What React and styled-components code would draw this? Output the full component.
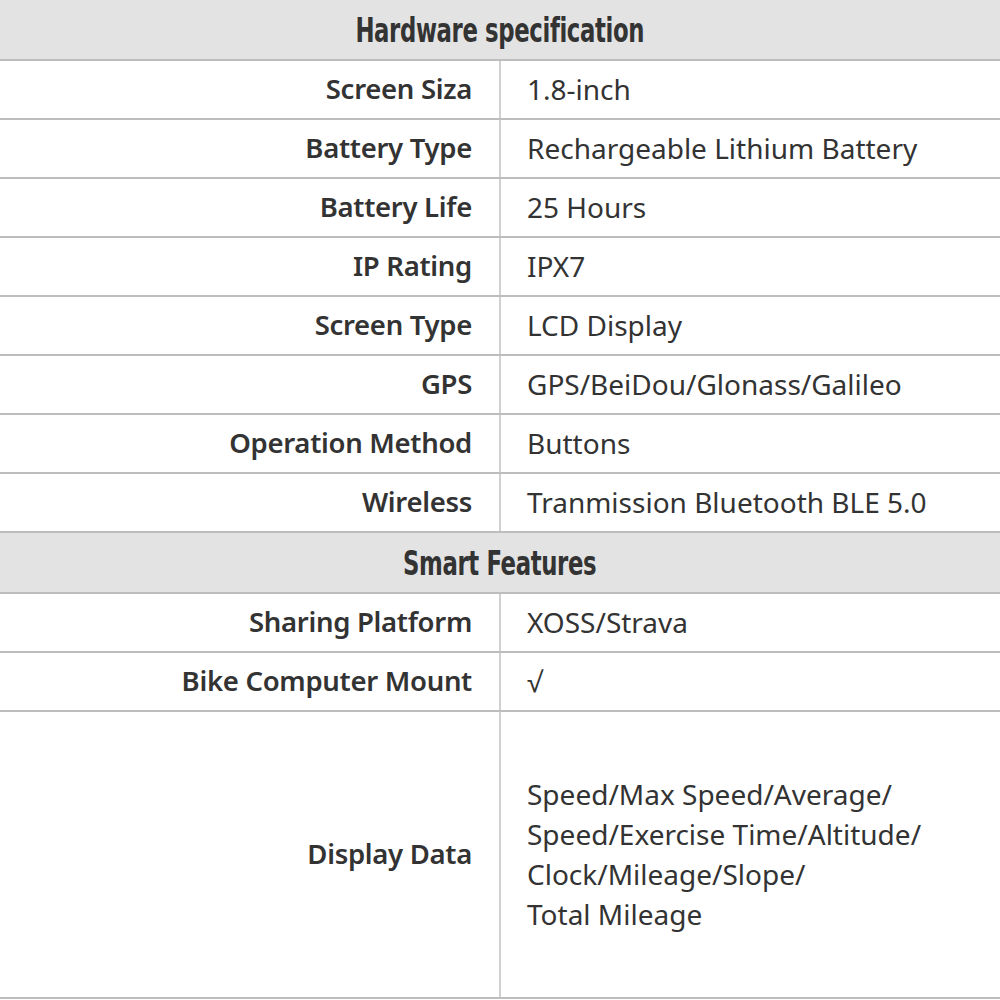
import React from 'react';
import styled, { createGlobalStyle } from 'styled-components';

const Global = createGlobalStyle`
  html, body { margin: 0; padding: 0; background: #fff; }
  body { width: 1000px; height: 1000px; overflow: hidden; }
`

const Table = styled.div`
  width: 1000px;
  display: flex;
  flex-direction: column;
  color: #333;
  font-family: "Noto Sans", "Open Sans", sans-serif;
`
const Heading = styled.div`
  height: ${p => p.h}px;
  box-sizing: border-box;
  background: #e3e3e3;
  border-bottom: 2px solid #bdbdbd;
  display: flex;
  align-items: center;
  justify-content: center;
`
const HeadingText = styled.span`
  font-family: "DejaVu Sans Condensed", "DejaVu Sans", sans-serif;
  font-weight: bold;
  font-size: 34px;
  color: #333;
  letter-spacing: -0.5px;
  display: inline-block;
  transform: scaleX(0.745);
`
const Row = styled.div`
  display: grid;
  grid-template-columns: 499px 2px 1fr;
  height: ${p => p.h || 59}px;
  box-sizing: border-box;
  border-bottom: 2px solid #bdbdbd;
`
const Divider = styled.div`
  background: #d0d0d0;
`
const Label = styled.div`
  display: flex;
  align-items: center;
  justify-content: flex-end;
  padding-right: 27px;
  font-size: 27.5px;
  letter-spacing: -0.3px;
  font-weight: 600;
  padding-bottom: 2px;
`
const Value = styled.div`
  display: flex;
  flex-direction: column;
  justify-content: center;
  padding-left: 26px;
  font-size: 28px;
  line-height: 40px;
  padding-bottom: 2px;
`

const hardware = [
  ['Screen Siza', '1.8-inch'],
  ['Battery Type', 'Rechargeable Lithium Battery'],
  ['Battery Life', '25 Hours'],
  ['IP Rating', 'IPX7'],
  ['Screen Type', 'LCD Display'],
  ['GPS', 'GPS/BeiDou/Glonass/Galileo'],
  ['Operation Method', 'Buttons'],
  ['Wireless', 'Tranmission Bluetooth BLE 5.0'],
]

const smart = [
  ['Sharing Platform', ['XOSS/Strava']],
  ['Bike Computer Mount', ['√']],
]

const display = ['Speed/Max Speed/Average/', 'Speed/Exercise Time/Altitude/', 'Clock/Mileage/Slope/', 'Total Mileage']

export default function App() {
  return (
    <>
      <Global />
      <Table>
        <Heading h={61}><HeadingText>Hardware specification</HeadingText></Heading>
        {hardware.map(([k, v]) => (
          <Row key={k}><Label>{k}</Label><Divider /><Value>{v}</Value></Row>
        ))}
        <Heading h={61}><HeadingText>Smart Features</HeadingText></Heading>
        {smart.map(([k, v]) => (
          <Row key={k}><Label>{k}</Label><Divider /><Value>{v.map(l => <div key={l}>{l}</div>)}</Value></Row>
        ))}
        <Row h={287}>
          <Label>Display Data</Label>
          <Divider />
          <Value>{display.map(l => <div key={l}>{l}</div>)}</Value>
        </Row>
      </Table>
    </>
  )
}
